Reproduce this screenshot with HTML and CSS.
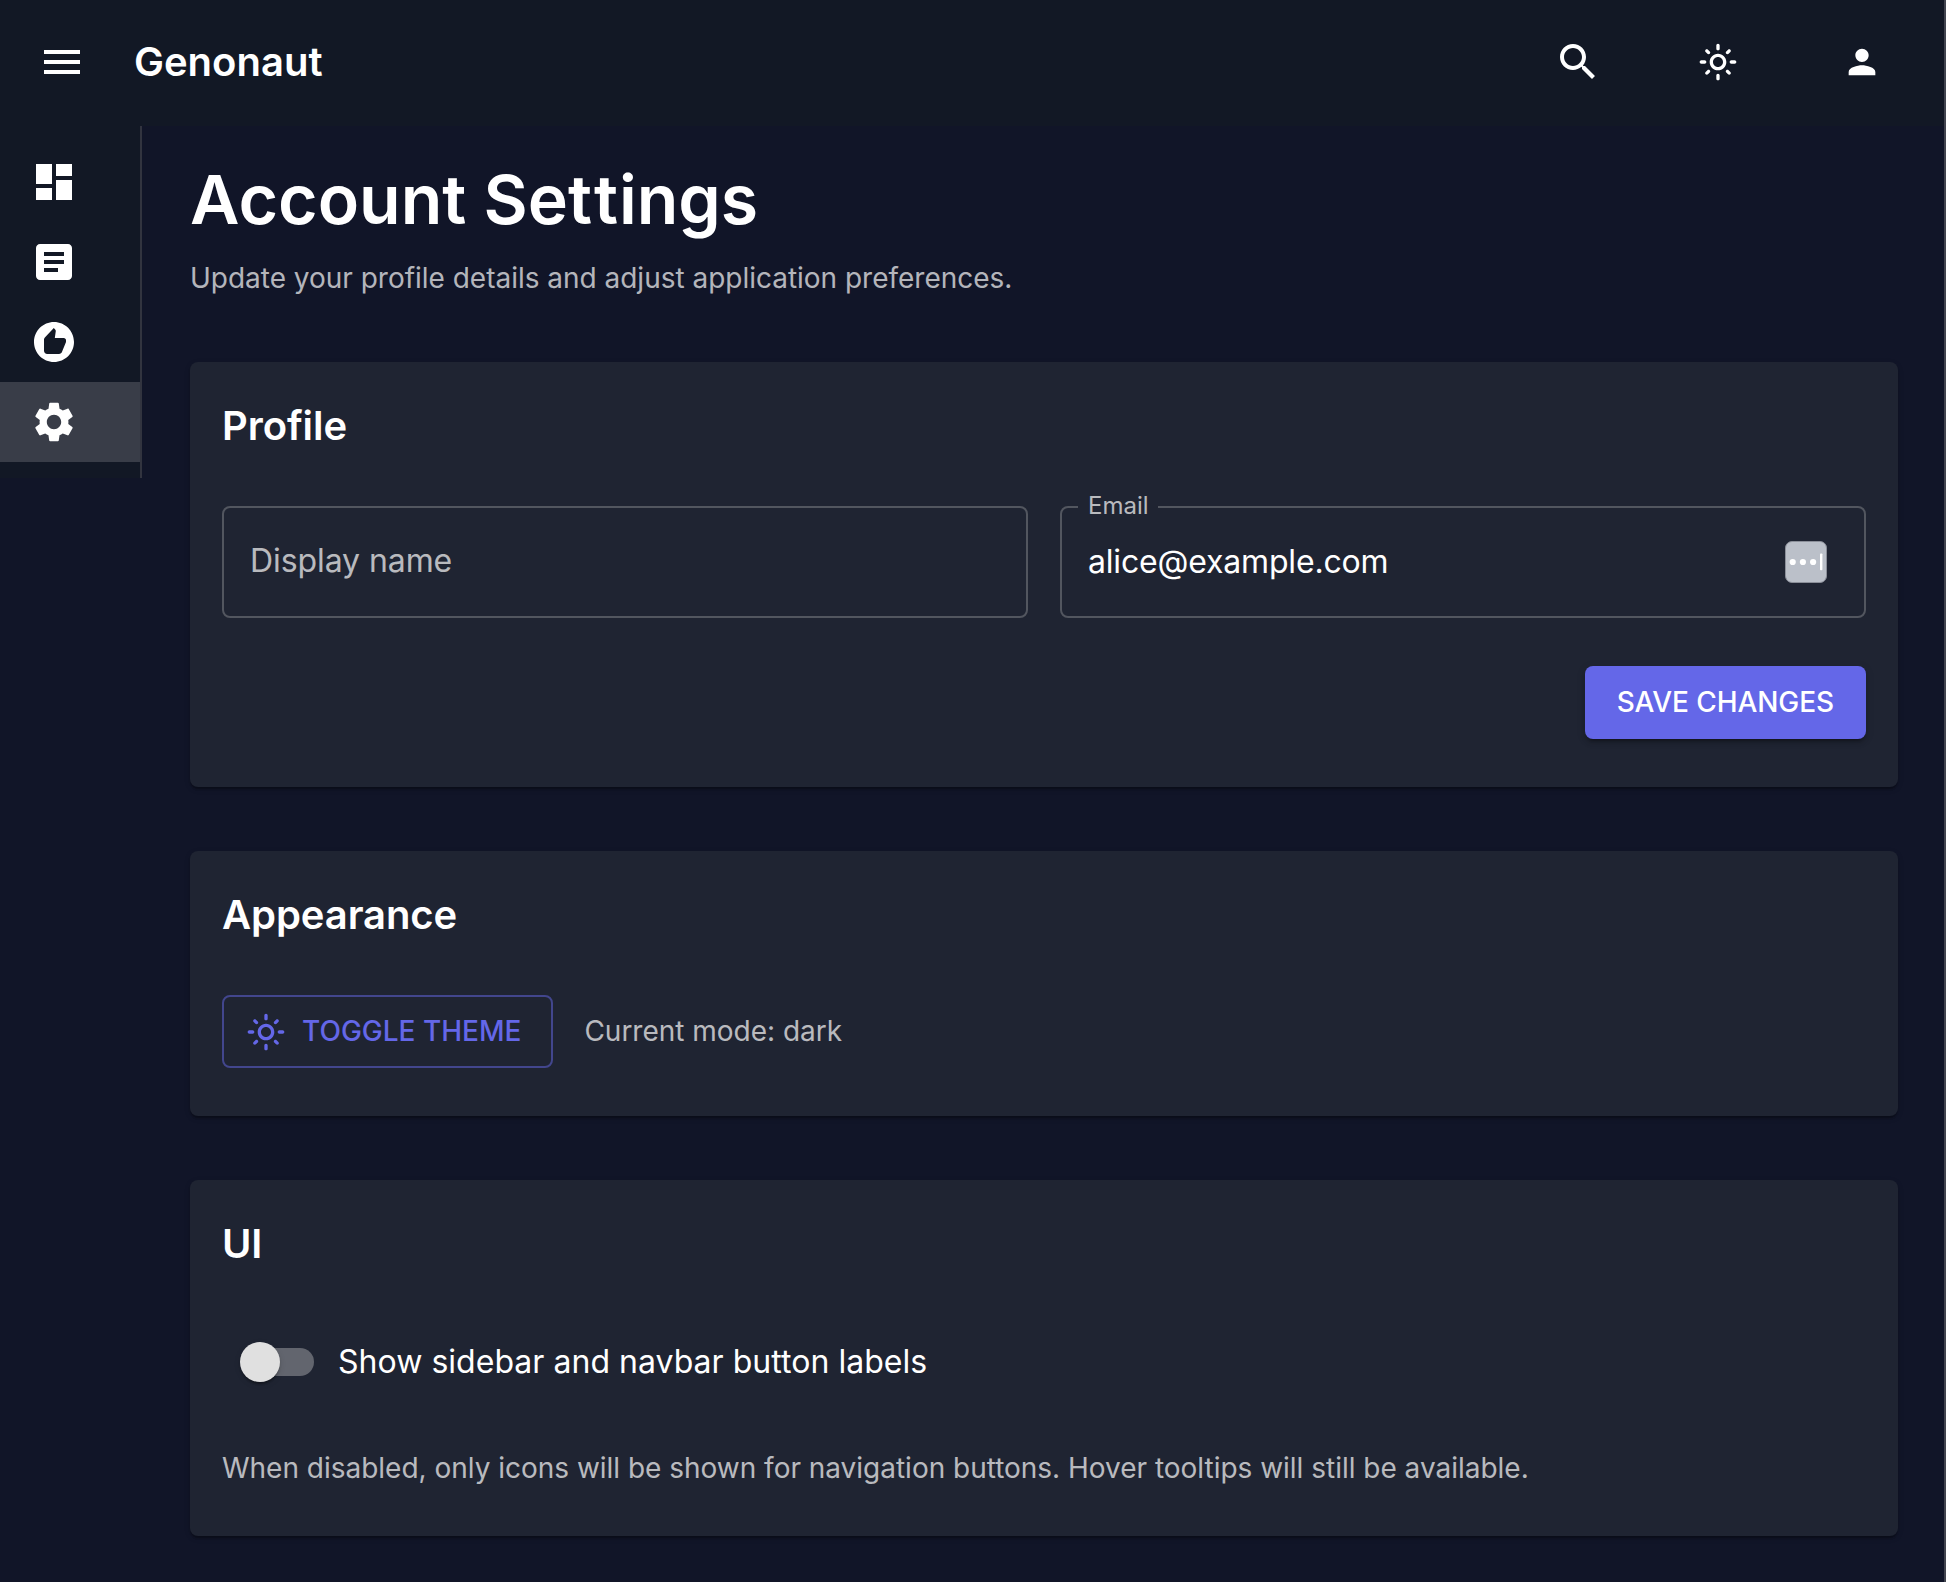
FILE: index.html
```html
<!DOCTYPE html>
<html lang="en">
<head>
<meta charset="utf-8">
<title>Genonaut</title>
<link rel="stylesheet" href="styles.css">
</head>
<body>
<svg width="0" height="0" class="sprite" aria-hidden="true">
  <symbol id="light-mode" viewBox="0 0 24 24"><path d="M12 9c1.65 0 3 1.35 3 3s-1.35 3-3 3-3-1.35-3-3 1.35-3 3-3m0-2c-2.76 0-5 2.24-5 5s2.24 5 5 5 5-2.24 5-5-2.24-5-5-5M2 13h2c.55 0 1-.45 1-1s-.45-1-1-1H2c-.55 0-1 .45-1 1s.45 1 1 1m18 0h2c.55 0 1-.45 1-1s-.45-1-1-1h-2c-.55 0-1 .45-1 1s.45 1 1 1M11 2v2c0 .55.45 1 1 1s1-.45 1-1V2c0-.55-.45-1-1-1s-1 .45-1 1m0 18v2c0 .55.45 1 1 1s1-.45 1-1v-2c0-.55-.45-1-1-1s-1 .45-1 1M5.99 4.58c-.39-.39-1.03-.39-1.41 0-.39.39-.39 1.03 0 1.41l1.06 1.06c.39.39 1.03.39 1.41 0s.39-1.03 0-1.41zm12.37 12.37c-.39-.39-1.03-.39-1.41 0-.39.39-.39 1.03 0 1.41l1.06 1.06c.39.39 1.03.39 1.41 0 .39-.39.39-1.03 0-1.41zm1.06-10.96c.39-.39.39-1.03 0-1.41-.39-.39-1.03-.39-1.41 0l-1.06 1.06c-.39.39-.39 1.03 0 1.41s1.03.39 1.41 0zM7.05 18.36c.39-.39.39-1.03 0-1.41-.39-.39-1.03-.39-1.41 0l-1.06 1.06c-.39.39-.39 1.03 0 1.41s1.03.39 1.41 0z"/></symbol>
</svg>
<header class="navbar">
  <button class="icon-button" aria-label="Menu"><svg class="icon" viewBox="0 0 24 24"><path d="M3 18h18v-2H3zm0-5h18v-2H3zm0-7v2h18V6z"/></svg></button>
  <div class="brand">Genonaut</div>
  <div class="actions">
    <button class="icon-button" aria-label="Search"><svg class="icon" viewBox="0 0 24 24"><path d="M15.5 14h-.79l-.28-.27C15.41 12.59 16 11.11 16 9.5 16 5.91 13.09 3 9.5 3S3 5.91 3 9.5 5.91 16 9.5 16c1.61 0 3.09-.59 4.23-1.57l.27.28v.79l5 4.99L20.49 19zm-6 0C7.01 14 5 11.99 5 9.5S7.01 5 9.5 5 14 7.01 14 9.5 11.99 14 9.5 14"/></svg></button>
    <button class="icon-button compact" aria-label="Theme"><svg class="icon icon-small"><use href="#light-mode"/></svg></button>
    <button class="icon-button compact account" aria-label="Account"><svg class="icon icon-small" viewBox="0 0 24 24"><path d="M12 12c2.21 0 4-1.79 4-4s-1.79-4-4-4-4 1.79-4 4 1.79 4 4 4m0 2c-2.67 0-8 1.34-8 4v2h16v-2c0-2.66-5.33-4-8-4"/></svg></button>
  </div>
</header>
<div class="layout">
  <nav class="sidebar">
    <a class="nav-item"><svg class="icon" viewBox="0 0 24 24"><path d="M3 13h8V3H3zm0 8h8v-6H3zm10 0h8V11h-8zm0-18v6h8V3z"/></svg></a>
    <a class="nav-item"><svg class="icon" viewBox="0 0 24 24"><path d="M19 3H5c-1.1 0-2 .9-2 2v14c0 1.1.9 2 2 2h14c1.1 0 2-.9 2-2V5c0-1.1-.9-2-2-2m-5 14H7v-2h7zm3-4H7v-2h10zm0-4H7V7h10z"/></svg></a>
    <a class="nav-item"><svg class="icon" viewBox="0 0 24 24"><path d="M12 2C6.48 2 2 6.48 2 12s4.48 10 10 10 10-4.48 10-10S17.52 2 12 2m6 9.8c0 .17-.02.34-.09.5l-1.9 4.61c-.25.66-.73 1.09-1.51 1.09H8.6c-.88 0-1.6-.72-1.6-1.6v-5.65c0-.39.16-.76.43-1.03L11.9 5l.69.69c.18.18.29.44.29.7v.2L12.41 10H16.9c.6 0 1.1.5 1.1 1.1z"/></svg></a>
    <a class="nav-item selected"><svg class="icon" viewBox="0 0 24 24"><path d="M19.14 12.94c.04-.3.06-.61.06-.94 0-.32-.02-.64-.07-.94l2.03-1.58c.18-.14.23-.41.12-.61l-1.92-3.32c-.12-.22-.37-.29-.59-.22l-2.39.96c-.5-.38-1.03-.7-1.62-.94l-.36-2.54c-.04-.24-.24-.41-.48-.41h-3.84c-.24 0-.43.17-.47.41l-.36 2.54c-.59.24-1.13.57-1.62.94l-2.39-.96c-.22-.08-.47 0-.59.22L2.74 8.87c-.12.21-.08.47.12.61l2.03 1.58c-.05.3-.09.63-.09.94s.02.64.07.94l-2.03 1.58c-.18.14-.23.41-.12.61l1.92 3.32c.12.22.37.29.59.22l2.39-.96c.5.38 1.03.7 1.62.94l.36 2.54c.05.24.24.41.48.41h3.84c.24 0 .44-.17.47-.41l.36-2.54c.59-.24 1.13-.56 1.62-.94l2.39.96c.22.08.47 0 .59-.22l1.92-3.32c.12-.22.07-.47-.12-.61zM12 15.6c-1.98 0-3.6-1.62-3.6-3.6s1.62-3.6 3.6-3.6 3.6 1.62 3.6 3.6-1.62 3.6-3.6 3.6"/></svg></a>
  </nav>
  <main class="content">
    <div class="page-head">
      <h1 class="page-title">Account Set<span class="pair">t</span>ings</h1>
      <p class="secondary">Update your profile details and adjust application preferences.</p>
    </div>
    <section class="card">
      <h2 class="card-title">Profile</h2>
      <div class="fields">
        <div class="field"><input class="input empty" placeholder="Display name" aria-label="Display name"></div>
        <div class="field">
          <label class="field-label" for="email">Email</label>
          <input class="input value" id="email" value="alice@example.com">
          <svg class="autofill" viewBox="0 0 42 42"><rect class="autofill-box" x=".5" y=".5" width="41" height="41" rx="6.5"/><circle cx="7.7" cy="21" r="3.1"/><circle cx="17.9" cy="21" r="3.1"/><circle cx="28.1" cy="21" r="3.1"/><rect x="35" y="12.5" width="2.4" height="16.8" rx=".8"/></svg>
        </div>
      </div>
      <button class="button contained">SAVE CHANGES</button>
    </section>
    <section class="card">
      <h2 class="card-title">Appearance</h2>
      <div class="theme-row">
        <button class="button outlined"><svg class="icon icon-small"><use href="#light-mode"/></svg>TOGGLE THEME</button>
        <p class="secondary mode">Current mode: dark</p>
      </div>
    </section>
    <section class="card">
      <h2 class="card-title">UI</h2>
      <div class="switch-row">
        <span class="switch"><span class="thumb"></span></span>
        <span class="switch-label">Show sidebar and navbar button labels</span>
      </div>
      <p class="secondary">When disabled, only icons will be shown for navigation buttons. Hover tooltips will still be available.</p>
    </section>
  </main>
</div>
</body>
</html>
```
FILE: styles.css
```css
* { box-sizing: border-box; }
body {
  margin: 0;
  min-height: 1582px;
  border-right: 2px solid #42444f;
  background: #111528;
  color: #fff;
  font-family: Inter, "Liberation Sans", sans-serif;
}
h1, h2, p { margin: 0; }
button { font: inherit; color: inherit; border: 0; background: none; padding: 0; }
.sprite { position: absolute; }
.icon { display: block; flex: none; width: 48px; height: 48px; fill: currentColor; }
.icon-small { width: 40px; height: 40px; }

.navbar {
  display: flex;
  align-items: center;
  height: 126px;
  padding: 0 54px 2px 30px;
  background: #121825;
}
.icon-button { display: flex; align-items: center; justify-content: center; width: 64px; height: 64px; }
.compact { width: 56px; }
.account { margin-left: 8px; }
.brand { margin-left: 40px; font-size: 40px; font-weight: 600; line-height: 64px; }
.actions { display: flex; margin-left: auto; gap: 80px; }

.layout { display: flex; align-items: flex-start; }
.sidebar { flex: none; width: 142px; padding: 16px 0; border-right: 2px solid #32343f; background: #121825; }
.nav-item { display: flex; align-items: center; height: 80px; padding-left: 30px; }
.selected { background: #393d48; }

.content { flex: 1; display: flex; flex-direction: column; gap: 64px; padding: 32px 46px 46px 48px; }
.page-head { display: flex; flex-direction: column; gap: 18px; }
.page-title { font-size: 68px; font-weight: 600; line-height: 82px; }
/* Opens up the tight "tt" kerning pair */
.pair { margin-left: 2px; margin-right: 1px; }
.secondary { color: rgba(255, 255, 255, 0.7); font-size: 28px; line-height: 40px; letter-spacing: -0.015px; }

.card {
  display: flex;
  flex-direction: column;
  gap: 48px;
  padding: 32px 32px 48px;
  border-radius: 8px;
  background: #1f2432;
  box-shadow: 0 4px 2px -2px rgba(0, 0, 0, 0.2), 0 2px 2px rgba(0, 0, 0, 0.14), 0 2px 6px rgba(0, 0, 0, 0.12);
}
.card-title { font-size: 40px; font-weight: 600; line-height: 64px; letter-spacing: -0.08px; }
.fields { display: grid; grid-template-columns: 1fr 1fr; gap: 32px; }
.field {
  position: relative;
  display: flex;
  align-items: center;
  height: 112px;
  padding: 0 37px 0 26px;
  border: 2px solid #52565f;
  border-radius: 8px;
}
.field-label {
  position: absolute;
  left: 16px;
  top: -20px;
  padding: 0 9px 0 10px;
  background: #1f2432;
  color: rgba(255, 255, 255, 0.7);
  font-size: 24px;
  line-height: 36px;
}
.input {
  flex: 1;
  min-width: 0;
  height: 46px;
  padding: 0;
  border: 0;
  outline: 0;
  background: none;
  color: #fff;
  font: 32px/46px Inter, "Liberation Sans", sans-serif;
}
.empty { margin-bottom: 2px; letter-spacing: -0.08px; }
.value { letter-spacing: -0.18px; }
.input::placeholder { color: rgba(255, 255, 255, 0.7); opacity: 1; }
.autofill { flex: none; width: 42px; height: 42px; fill: #fff; }
.autofill-box { fill: #bbc0c9; stroke: #8b8f99; stroke-width: 1; }

.button {
  display: flex;
  align-items: center;
  height: 73px;
  border-radius: 8px;
  font-size: 28px;
  font-weight: 500;
  line-height: 49px;
}
.contained {
  align-self: flex-end;
  padding: 0 32px;
  letter-spacing: -0.08px;
  background: #6467e8;
  box-shadow: 0 6px 2px -4px rgba(0, 0, 0, 0.2), 0 4px 4px rgba(0, 0, 0, 0.14), 0 2px 10px rgba(0, 0, 0, 0.12);
}
.outlined { gap: 16px; padding: 0 30px 0 22px; border: 2px solid #42468d; color: #6467e8; }
.theme-row { display: flex; align-items: center; gap: 32px; }
.mode { margin: 0 0 2px -1px; }

.switch-row { display: flex; align-items: center; height: 76px; }
.switch {
  display: flex;
  align-items: center;
  width: 68px;
  height: 28px;
  margin: 0 24px;
  border-radius: 14px;
  background: #62656e;
}
.thumb {
  flex: none;
  width: 40px;
  height: 40px;
  margin-left: -6px;
  border-radius: 50%;
  background: #e0e0e0;
  box-shadow: 0 4px 2px -2px rgba(0, 0, 0, 0.2), 0 2px 2px rgba(0, 0, 0, 0.14), 0 2px 6px rgba(0, 0, 0, 0.12);
}
.switch-label { font-size: 32px; line-height: 48px; letter-spacing: 0.03px; }
```
